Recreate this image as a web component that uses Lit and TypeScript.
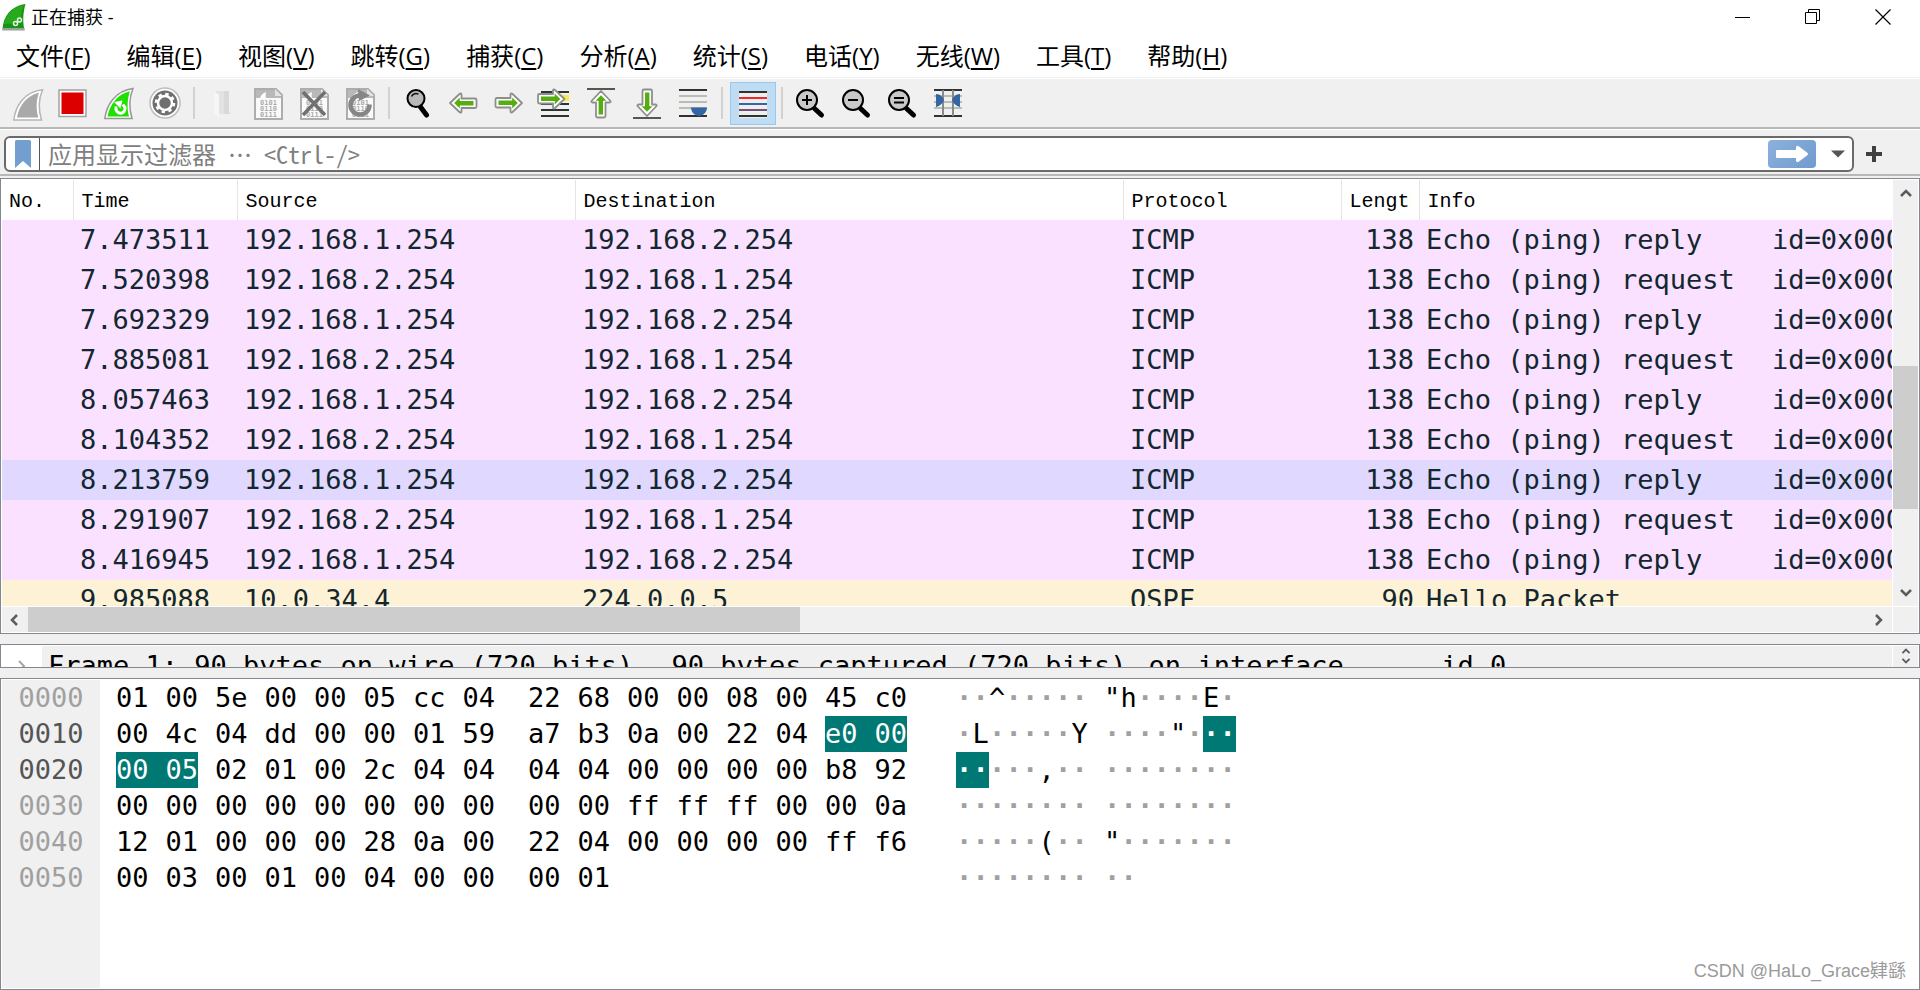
import { LitElement, html, svg, css, nothing, TemplateResult } from "lit";
import { customElement, state } from "lit/decorators.js";
import { classMap } from "lit/directives/class-map.js";

interface Packet {
  time: string;
  src: string;
  dst: string;
  proto: string;
  len: number;
  info: string;
  id?: string;
  kind: "icmp" | "ospf";
}

const A = "192.168.1.254";
const B = "192.168.2.254";
const reply = (time: string): Packet => ({ time, src: A, dst: B, proto: "ICMP", len: 138, info: "Echo (ping) reply", id: "id=0x0001", kind: "icmp" });
const request = (time: string): Packet => ({ time, src: B, dst: A, proto: "ICMP", len: 138, info: "Echo (ping) request", id: "id=0x0001", kind: "icmp" });

const PACKETS: Packet[] = [
  reply("7.473511"),
  request("7.520398"),
  reply("7.692329"),
  request("7.885081"),
  reply("8.057463"),
  request("8.104352"),
  reply("8.213759"),
  request("8.291907"),
  reply("8.416945"),
  { time: "9.985088", src: "10.0.34.4", dst: "224.0.0.5", proto: "OSPF", len: 90, info: "Hello Packet", kind: "ospf" },
];

const BYTES = (
  "01 00 5e 00 00 05 cc 04 22 68 00 00 08 00 45 c0 " +
  "00 4c 04 dd 00 00 01 59 a7 b3 0a 00 22 04 e0 00 " +
  "00 05 02 01 00 2c 04 04 04 04 00 00 00 00 b8 92 " +
  "00 00 00 00 00 00 00 00 00 00 ff ff ff 00 00 0a " +
  "12 01 00 00 00 28 0a 00 22 04 00 00 00 00 ff f6 " +
  "00 03 00 01 00 04 00 00 00 01"
).split(" ");
const FIELD_START = 30;
const FIELD_END = 33;

const MENUS: [string, string][] = [
  ["文件", "F"], ["编辑", "E"], ["视图", "V"], ["跳转", "G"], ["捕获", "C"], ["分析", "A"],
  ["统计", "S"], ["电话", "Y"], ["无线", "W"], ["工具", "T"], ["帮助", "H"],
];

const icon = (body: unknown, size = 32) =>
  html`<svg class="icon" width=${size} height=${size} viewBox="0 0 ${size} ${size}" aria-hidden="true">${body}</svg>`;

const fin = (fill: string, edge: string) => svg`
  <path d="M2.8 33C4.5 18 14 4.500 31.500 2.700C27.500 12 27.500 23 30.500 33Z" fill="#fff" stroke=${edge} stroke-width="1.500"/>
  <path d="M6 30.500C8 19 15.500 8.500 28 5.800C25 14 25 22 27.300 30.500Z" fill=${fill}/>`;

const page = svg`
  <path d="M3 2H24L30 8V32H3Z" fill="#fafafa" stroke="#adadad" stroke-width="2"/>
  <path d="M4 3H24L29 8V11H4Z" fill="#b9b9b9"/>
  <path d="M8 11C9 8 11 6 14 5C13.500 8 13.500 9 14 11Z" fill="#fff"/>
  <path d="M23 2V9H30Z" fill="#e4e4e4"/>
  <g font-family="DejaVu Sans Mono, monospace" font-size="7" font-weight="bold" fill="#adadad" text-anchor="middle">
    <text x="16.500" y="18">0101</text><text x="16.500" y="24">0110</text><text x="16.500" y="30">0111</text>
  </g>`;

const ARROW = "M3 16L13 6.500Q14.500 6 14.500 8V11.500H28Q29.500 11.500 29.500 13V19.500Q29.500 21 28 21H14.500V24.500Q14.500 26 13 25.500Z";
const ARROW_IN = "M7.200 16L12.800 10.600V14H26.500V18.400H12.800V21.500Z";
const arrow = (transform: string) => svg`
  <g transform=${transform}>
    <path d=${ARROW} fill="#fff" stroke="#8d8f8a" stroke-width="1.800" stroke-linejoin="round"/>
    <path d=${ARROW_IN} fill="#56ad10"/>
  </g>`;

const lens = (sign: unknown) => svg`
  <path d="M20.500 21.500L27.500 28" stroke="#000" stroke-width="5" stroke-linecap="round"/>
  <circle cx="13" cy="13" r="10" fill="#c9c9c9" stroke="#000" stroke-width="2"/>
  <g stroke="#000" stroke-width="2">${sign}</g>`;

const bars = (items: [number, string][]) =>
  items.map(([y, c]) => svg`<path d="M2 ${y}H30" stroke=${c} stroke-width="2"/>`);

const ICONS: Record<string, TemplateResult> = {
  start: icon(fin("#a9a9a9", "#b5b5b5")),
  stop: icon(svg`<rect x="2" y="3" width="27" height="26.500" fill="#fff" stroke="#a2a2a2" stroke-width="1.500"/><rect x="4.500" y="5.500" width="22" height="21.500" fill="#dc0000"/>`),
  restart: icon(svg`
    <path d="M1.800 31.500C3.500 17.500 13 3.500 30 1.500C26 11 26 21.500 29 31.500Z" fill="#fff" stroke="#989898" stroke-width="1.500"/>
    <path d="M4.500 29.500C6.500 18.500 14 7 27 4.200C24 13 24 21.500 26 29.500Z" fill="#1fe000"/>
    <path d="M13 19.500C11.500 28 23 28.500 22 20.500L20 17.500" fill="none" stroke="#fff" stroke-width="3"/>
    <path d="M19.500 13.500L11 15L17.500 21.500Z" fill="#fff"/>`),
  options: icon(svg`
    <circle cx="16" cy="16" r="15" fill="#fff" stroke="#bdbdbd" stroke-width="1.500"/>
    <circle cx="16" cy="16" r="12.500" fill="#6f6f6f"/>
    <circle cx="16" cy="16" r="7" fill="none" stroke="#fff" stroke-width="2.500"/>
    <circle cx="16" cy="16" r="9" fill="none" stroke="#fff" stroke-width="2.500" stroke-dasharray="3.400 3.668"/>`),
  open: icon(svg`<path d="M9 4H23V24L25 27H14L9 24Z" fill="#e3e3e3"/><path d="M8 4L13 8V31L8 26Z" fill="#f6f6f6"/><path d="M18 4H23V27H18Z" fill="#d9d9d9"/>`),
  save: icon(page),
  close: icon(svg`${page}<path d="M5 5L27 28M27 5L5 28" stroke="#707070" stroke-width="3.500"/>`),
  reload: icon(svg`${page}<path d="M16 8.500A9.500 9.500 0 1 0 25.500 17.500" fill="none" stroke="#868686" stroke-width="4.500"/><path d="M14 2L26 8.500L15 14Z" fill="#868686"/>`),
  find: icon(svg`
    <path d="M19.500 20L25.500 28" stroke="#000" stroke-width="5" stroke-linecap="round"/>
    <circle cx="15" cy="11.500" r="8.500" fill="#b9b9b9" stroke="#000" stroke-width="2"/>
    <path d="M10.500 9.500C12 6.500 15 6 17.500 7" fill="none" stroke="#111" stroke-width="1.500"/>`),
  back: icon(arrow("")),
  forward: icon(arrow("rotate(180 16 16)")),
  goto: icon(svg`
    ${bars([[5, "#2e3436"], [23, "#2e3436"], [29, "#2e3436"]])}
    <path d="M20 8H30V14H20Z" fill="#fce94f"/><path d="M2 17H30" stroke="#2e3436" stroke-width="2"/>
    ${arrow("translate(-3.500 -4) rotate(180 16 16)")}`),
  first: icon(svg`<path d="M2 2H30" stroke="#555753" stroke-width="2"/>${arrow("translate(0 1) rotate(90 16 16)")}`),
  last: icon(svg`<path d="M2 31H30" stroke="#555753" stroke-width="2"/>${arrow("rotate(-90 16 16)")}`),
  autoscroll: icon(svg`
    ${bars([[3, "#2e3436"], [9, "#babdb6"], [15, "#babdb6"], [21, "#babdb6"], [29, "#2e3436"]])}
    <path d="M14 20.500H30C30 25 26 29 22 29S14 25 14 20.500Z" fill="#3465a4"/>`),
  colorize: icon(svg`
    <path d="M2 4H30V31H2Z" fill="#eeeeec"/>
    ${bars([[5, "#2e3436"], [11, "#ef2929"], [17, "#3465a4"], [23, "#75507b"], [29, "#2e3436"]])}`),
  zoomIn: icon(lens(svg`<path d="M8 13H18M13 8V18"/>`)),
  zoomOut: icon(lens(svg`<path d="M8 13H18"/>`)),
  zoomReset: icon(lens(svg`<path d="M8 11H18M8 15.500H18"/>`)),
  resize: icon(svg`
    ${bars([[3, "#2e3436"], [9, "#babdb6"], [15, "#babdb6"], [21, "#babdb6"], [29, "#2e3436"]])}
    <path d="M11 3V29M21 3V29" stroke="#888a85" stroke-width="2"/>
    <path d="M4 7C8 7 11 10 12 13C11 16 8 19 4 20ZM28 7C24 7 21 10 20 13C21 16 24 19 28 20Z" fill="#3465a4"/>`),
};

const TOOLS: [string, string][] = [
  ["start", "开始捕获"], ["stop", "停止捕获"], ["restart", "重新开始捕获"], ["options", "捕获选项"], ["|", ""],
  ["open", "打开"], ["save", "保存"], ["close", "关闭"], ["reload", "重新加载"], ["|", ""],
  ["find", "查找分组"], ["back", "后退"], ["forward", "前进"], ["goto", "转到分组"], ["first", "首个分组"],
  ["last", "最新分组"], ["autoscroll", "自动滚动"], ["|", ""], ["colorize", "着色"], ["|", ""],
  ["zoomIn", "放大"], ["zoomOut", "缩小"], ["zoomReset", "普通大小"], ["resize", "调整列宽"],
];

const chevron = (d: string, size = 14) =>
  html`<svg width=${size} height=${size} viewBox="0 0 14 14" aria-hidden="true"><path d=${d} fill="none" stroke="#5c5c5c" stroke-width="2.500"/></svg>`;
const UP = "M2 10L7 5L12 10";
const DOWN = "M2 4L7 9L12 4";
const LEFT = "M9 2L4 7L9 12";
const RIGHT = "M4 2L9 7L4 12";

@customElement("packet-list")
class PacketList extends LitElement {
  @state() private current = 6;

  static styles = css`
    :host {
      display: grid;
      grid-template: minmax(0, 1fr) 25px / minmax(0, 1fr) 25px;
      gap: 1px;
      padding: 1px;
      box-sizing: border-box;
      border: 1px solid #828790;
      background: #fff;
      overflow: hidden;
    }
    .view { overflow: hidden; }
    table {
      width: 100%;
      border-collapse: collapse;
      table-layout: fixed;
    }
    .c-no { width: 71px; }
    .c-time { width: 164px; }
    .c-src { width: 338px; }
    .c-dst { width: 548px; }
    .c-proto { width: 218px; }
    .c-len { width: 78px; }
    th {
      box-sizing: border-box;
      height: 40px;
      padding: 4px 8px 0;
      border-right: 1px solid #e5e5e5;
      text-align: left;
      font: 20px/36px "Liberation Mono", monospace;
      color: #000;
      overflow: hidden;
      white-space: nowrap;
    }
    th:first-child { padding-left: 7px; }
    th:last-child { border-right: none; }
    .clip { display: block; overflow: hidden; }
    td {
      height: 40px;
      padding: 0 7px;
      font: 27px/40px "DejaVu Sans Mono", monospace;
      color: #12272e;
      white-space: pre;
      overflow: hidden;
    }
    .icmp { background: #fae1ff; }
    .ospf { background: #fdf2d6; }
    .current { background: #e0d8ff; }
    .num { text-align: right; padding-right: 5px; }
    .info {
      display: grid;
      grid-template-columns: 346px max-content;
    }
    .bar { display: flex; background: #f0f0f0; }
    .vbar { flex-direction: column; }
    .corner { background: #f0f0f0; }
    .arrow {
      display: grid;
      place-items: center;
      flex: none;
      width: 26px;
      height: 26px;
      padding: 0;
      border: none;
      background: none;
    }
    .track { flex: 1; display: flex; }
    .vbar .track { flex-direction: column; }
    .before-v { flex: 161; }
    .thumb-v { flex: 144; background: #cdcdcd; }
    .after-v { flex: 71; }
    .thumb-h { flex: 773; background: #cdcdcd; }
    .after-h { flex: 1067; }
  `;

  render() {
    return html`
      <div class="view">
        <table>
          <colgroup>
            <col class="c-no" /><col class="c-time" /><col class="c-src" /><col class="c-dst" />
            <col class="c-proto" /><col class="c-len" /><col />
          </colgroup>
          <thead>
            <tr>
              ${["No.", "Time", "Source", "Destination", "Protocol", "Length", "Info"].map(
                (h) => html`<th scope="col"><span class="clip">${h}</span></th>`
              )}
            </tr>
          </thead>
          <tbody>
            ${PACKETS.map(
              (p, i) => html`<tr
                class=${classMap({ icmp: p.kind === "icmp", ospf: p.kind === "ospf", current: i === this.current })}
                @click=${() => (this.current = i)}
              >
                <td></td>
                <td>${p.time}</td>
                <td>${p.src}</td>
                <td>${p.dst}</td>
                <td>${p.proto}</td>
                <td class="num">${p.len}</td>
                <td><div class="info"><span>${p.info}</span>${p.id ? html`<span>${p.id}</span>` : nothing}</div></td>
              </tr>`
            )}
          </tbody>
        </table>
      </div>
      <div class="bar vbar">
        <button class="arrow" aria-label="向上滚动">${chevron(UP)}</button>
        <div class="track"><div class="before-v"></div><div class="thumb-v"></div><div class="after-v"></div></div>
        <button class="arrow" aria-label="向下滚动">${chevron(DOWN)}</button>
      </div>
      <div class="bar">
        <button class="arrow" aria-label="向左滚动">${chevron(LEFT)}</button>
        <div class="track"><div class="thumb-h"></div><div class="after-h"></div></div>
        <button class="arrow" aria-label="向右滚动">${chevron(RIGHT)}</button>
      </div>
      <div class="corner"></div>
    `;
  }
}

@customElement("packet-bytes")
class PacketBytes extends LitElement {
  static styles = css`
    :host {
      display: grid;
      grid-template-columns: 98px minmax(0, 1fr);
      padding: 1px;
      box-sizing: border-box;
      border: 1px solid #828790;
      background: #fff;
      font: 27px/36px "DejaVu Sans Mono", monospace;
      color: #000;
      overflow: hidden;
    }
    .offsets { background: #f0f0f0; color: #a0a0a0; text-align: center; }
    .near { color: #555; }
    .rows { padding-left: 16px; }
    .row { display: flex; height: 36px; }
    .hex, .text { display: grid; flex: none; grid-template-columns: repeat(8, 1fr); }
    .hex { width: 396px; margin-right: 16px; }
    .hex + .hex { margin-right: 32px; }
    .text { width: 132px; margin-right: 16px; }
    .text span { text-align: center; }
    .dot { color: #a0a0a0; font-weight: bold; }
    .hl { background: #007873; color: #fff; }
    .text .hl { font-weight: bold; }
    .end { justify-self: start; }
  `;

  private hexCell(i: number) {
    const hl = i >= FIELD_START && i <= FIELD_END;
    return html`<span class=${classMap({ hl, end: hl && (i === FIELD_END || i % 8 === 7) })}>${BYTES[i]}</span>`;
  }

  private textCell(i: number) {
    const code = parseInt(BYTES[i], 16);
    const printable = code >= 0x20 && code < 0x7f;
    const hl = i >= FIELD_START && i <= FIELD_END;
    return html`<span class=${classMap({ hl, dot: !printable && !hl })}>${printable ? String.fromCharCode(code) : "·"}</span>`;
  }

  render() {
    const rows = Math.ceil(BYTES.length / 16);
    const group = (start: number) =>
      Array.from({ length: 8 }, (_, k) => start + k).filter((i) => i < BYTES.length);
    return html`
      <div class="offsets">
        ${Array.from({ length: rows }, (_, r) => html`<div class=${r === 1 || r === 2 ? "near" : ""}>${(r * 16).toString(16).padStart(4, "0")}</div>`)}
      </div>
      <div class="rows">
        ${Array.from({ length: rows }, (_, r) => html`<div class="row">
          <div class="hex">${group(r * 16).map((i) => this.hexCell(i))}</div>
          <div class="hex">${group(r * 16 + 8).map((i) => this.hexCell(i))}</div>
          <div class="text">${group(r * 16).map((i) => this.textCell(i))}</div>
          <div class="text">${group(r * 16 + 8).map((i) => this.textCell(i))}</div>
        </div>`)}
      </div>
    `;
  }
}

@customElement("app-root")
class AppRoot extends LitElement {
  @state() private colorize = true;

  static styles = css`
    :host {
      position: relative;
      display: flex;
      flex-direction: column;
      height: 100vh;
      overflow: hidden;
      background: #f0f0f0;
      color: #000;
      font-family: "Open Sans", "Noto Sans CJK SC", sans-serif;
    }
    button { font: inherit; color: inherit; border: none; background: none; padding: 0; }
    .titlebar {
      display: flex;
      align-items: center;
      flex: none;
      height: 34px;
      padding: 0 2px;
      background: #fff;
    }
    .title { flex: 1; margin-left: 5px; font: 18px/34px "Open Sans", "Noto Sans CJK SC", sans-serif; }
    .win { display: grid; place-items: center; width: 70px; height: 34px; }
    .menubar {
      display: flex;
      flex: none;
      height: 43px;
      background: #fff;
      border-bottom: 1px solid #f0f0f0;
    }
    .menu { padding: 0 18px; font-size: 24px; line-height: 42px; }
    .menu:first-child { padding-left: 16px; }
    .menu u { text-decoration-thickness: 2px; text-underline-offset: 3px; }
    .toolbar {
      display: flex;
      align-items: center;
      flex: none;
      height: 48px;
      padding-left: 4px;
      border-top: 1px solid #fff;
      border-bottom: 2px solid #b8b8b8;
    }
    .tool { display: grid; place-items: center; width: 46px; height: 43px; box-sizing: border-box; }
    .tool.on { margin-left: 3px; border: 1px solid #91c9f7; background: #c0dcf3; }
    .sep { width: 11px; height: 32px; display: flex; justify-content: center; }
    .sep::before { content: ""; width: 2px; background: #d2d2d2; }
    .icon { display: block; overflow: visible; }
    .filterbar {
      display: flex;
      align-items: center;
      flex: none;
      height: 44px;
      padding: 0 38px 0 4px;
      border-top: 1px solid #fff;
      border-bottom: 2px solid #b8b8b8;
      margin-bottom: 2px;
    }
    .field {
      display: flex;
      align-items: center;
      flex: 1;
      height: 36px;
      margin-top: 4px;
      box-sizing: border-box;
      border: 2px solid #6a6a6a;
      border-radius: 6px;
      background: #fff;
    }
    .bookmark {
      display: grid;
      place-items: center;
      width: 34px;
      height: 32px;
      border-right: 1px solid #555;
    }
    .query {
      flex: 1;
      min-width: 0;
      height: 32px;
      padding: 0 0 0 8px;
      border: none;
      outline: none;
      background: none;
      font: 24px/32px "Noto Sans Mono CJK SC", "Noto Sans CJK SC", monospace;
      color: #000;
    }
    .query::placeholder { color: #808080; opacity: 1; }
    .apply {
      display: grid;
      place-items: center;
      width: 48px;
      height: 28px;
      margin-right: 8px;
      border-radius: 4px;
      background: linear-gradient(135deg, #8db1dd, #6e9bce);
    }
    .history { display: grid; place-items: center; width: 28px; height: 32px; }
    .add { display: grid; place-items: center; width: 16px; height: 32px; margin: 4px 0 0 12px; }
    .panes {
      flex: 1;
      min-height: 0;
      display: grid;
      grid-template-rows: minmax(0, 456fr) 24px minmax(0, 312fr);
      gap: 10px;
    }
    .details {
      display: grid;
      grid-template-columns: 39px minmax(0, 1fr) 25px;
      padding: 1px;
      column-gap: 1px;
      border: 1px solid #828790;
      background: #fff;
      box-sizing: border-box;
      overflow: hidden;
    }
    .expander { display: grid; place-items: center; width: 39px; height: 40px; }
    .frame {
      display: flex;
      gap: 22px;
      padding-left: 6px;
      background: #f0f0f0;
      font: 27px/40px "DejaVu Sans Mono", monospace;
      white-space: pre;
      overflow: hidden;
    }
    .spin { display: flex; flex-direction: column; align-items: center; background: #f0f0f0; }
    .spin button { display: grid; place-items: center; height: 10px; width: 25px; }
    .mark {
      position: absolute;
      right: 14px;
      bottom: 5px;
      font: 18px/28px "Liberation Sans", "Noto Sans CJK SC", sans-serif;
      color: #9a9a9a;
    }
  `;

  private tool([name, label]: [string, string]) {
    if (name === "|") return html`<span class="sep"></span>`;
    const on = name === "colorize" && this.colorize;
    return html`<button
      class=${classMap({ tool: true, on })}
      aria-label=${label}
      @click=${() => { if (name === "colorize") this.colorize = !this.colorize; }}
    >${ICONS[name]}</button>`;
  }

  render() {
    return html`
      <header class="titlebar">
        <svg width="24" height="28" viewBox="0 0 24 28" aria-hidden="true">
          <path d="M0.500 27C1 13 9 3 23.500 1C21 10 20.500 18 22.500 27Z" fill="#179417"/>
          <path d="M2 21C4 12 11 4 21.500 2.500C19 9 19 14 19 20Z" fill="#2fb31f" opacity="0.7"/>
          <path d="M0.500 25H22.500V27.500H0.500Z" fill="#9aa39a"/>
          <g fill="none" stroke="#e4f5e4" stroke-width="1.500"><circle cx="13.500" cy="20.500" r="2"/><circle cx="17.500" cy="17" r="2"/></g>
        </svg>
        <div class="title">正在捕获 -</div>
        <button class="win" aria-label="最小化"><svg width="16" height="16" viewBox="0 0 16 16"><path d="M0 8.500H15" stroke="#000"/></svg></button>
        <button class="win" aria-label="还原"><svg width="16" height="16" viewBox="0 0 16 16"><path d="M0.500 3.500H11.500V14.500H0.500ZM3.500 3.500V0.500H14.500V11.500H11.500" fill="none" stroke="#000"/></svg></button>
        <button class="win" aria-label="关闭"><svg width="16" height="16" viewBox="0 0 16 16"><path d="M0.500 0.500L15.500 15.500M15.500 0.500L0.500 15.500" stroke="#000" stroke-width="1.200"/></svg></button>
      </header>
      <nav class="menubar">
        ${MENUS.map(([t, k]) => html`<button class="menu">${t}(<u>${k}</u>)</button>`)}
      </nav>
      <div class="toolbar">${TOOLS.map((t) => this.tool(t))}</div>
      <div class="filterbar">
        <div class="field">
          <button class="bookmark" aria-label="书签">
            <svg width="16" height="28" viewBox="0 0 16 28"><path d="M0 1.500Q0 0 1.500 0H14.500Q16 0 16 1.500V28L8 21L0 28Z" fill="#729fcf"/></svg>
          </button>
          <input class="query" type="text" aria-label="显示过滤器" placeholder="应用显示过滤器 … &lt;Ctrl-/&gt;" />
          <button class="apply" aria-label="应用">
            <svg width="32" height="18" viewBox="0 0 32 18"><path d="M1 5H20V2Q21 0 23 1.500L31 7.500Q33 9 31 10.500L23 16.500Q21 18 20 16V13H1Q0 13 0 12V6Q0 5 1 5Z" fill="#fff"/></svg>
          </button>
          <button class="history" aria-label="历史">
            <svg width="14" height="8" viewBox="0 0 14 8"><path d="M0 0.500H14L7 7.500Z" fill="#555753"/></svg>
          </button>
        </div>
        <button class="add" aria-label="添加过滤器">
          <svg width="16" height="16" viewBox="0 0 16 16"><path d="M8 0V16M0 8H16" stroke="#404040" stroke-width="4"/></svg>
        </button>
      </div>
      <main class="panes">
        <packet-list></packet-list>
        <section class="details">
          <span class="expander"><svg width="14" height="14" viewBox="0 0 14 14"><path d=${RIGHT} fill="none" stroke="#a6a6a6" stroke-width="2"/></svg></span>
          <div class="frame"><span>Frame 1: 90 bytes on wire (720 bits),</span><span>90 bytes captured (720 bits)</span><span>on interface    , id 0</span></div>
          <div class="spin">
            <button aria-label="向上滚动">${chevron(UP, 10)}</button>
            <button aria-label="向下滚动">${chevron(DOWN, 10)}</button>
          </div>
        </section>
        <packet-bytes></packet-bytes>
      </main>
      <div class="mark">CSDN @HaLo_Grace肄繇</div>
    `;
  }
}
